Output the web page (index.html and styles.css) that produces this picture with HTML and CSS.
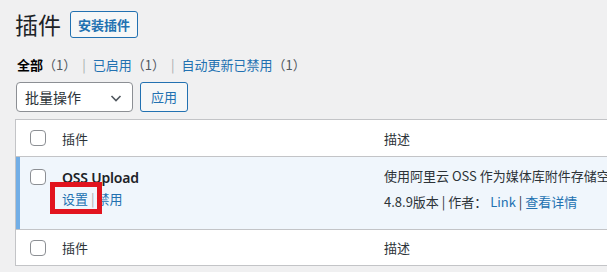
FILE: index.html
```html
<!DOCTYPE html>
<html lang="zh-CN">
<head>
<meta charset="utf-8">
<link rel="stylesheet" href="styles.css">
</head>
<body>
<div class="wrap">
  <div class="head">
    <h1 class="title">插件</h1>
    <a class="btn-add">安装插件</a>
  </div>
  <ul class="subsub">
    <li><b class="current">全部</b><span class="count">（1）</span><span class="sep">|</span></li>
    <li><a>已启用</a><span class="count">（1）</span><span class="sep">|</span></li>
    <li><a>自动更新已禁用</a><span class="count">（1）</span></li>
  </ul>
  <div class="actions">
    <div class="select">
      <span>批量操作</span>
      <svg class="chev" width="16" height="16" viewBox="0 0 16 16"><path d="M3.5 6 L8 10.5 L12.5 6" fill="none" stroke="#50575e" stroke-width="1.6"/></svg>
    </div>
    <a class="btn">应用</a>
  </div>
  <div class="table">
    <div class="row head-row">
      <div class="c1"><span class="cb"></span></div>
      <div class="c2">插件</div>
      <div class="c3">描述</div>
    </div>
    <div class="row active">
      <div class="c1"><span class="cb"></span></div>
      <div class="c2">
        <div class="pname">OSS Upload</div>
        <div class="ractions">
          <a class="set">设置</a><span class="rsep">|</span><a>禁用</a>
          <span class="mark"></span>
        </div>
      </div>
      <div class="c3">
        <div class="desc">使用阿里云 OSS 作为媒体库附件存储空间。</div>
        <div class="meta">4.8.9版本 <span class="msep">|</span> 作者： <a>Link</a> <span class="msep">|</span> <a>查看详情</a></div>
      </div>
    </div>
    <div class="row foot-row">
      <div class="c1"><span class="cb"></span></div>
      <div class="c2">插件</div>
      <div class="c3">描述</div>
    </div>
  </div>
</div>
</body>
</html>
```

FILE: styles.css
```css
html, body {
  margin: 0;
  padding: 0;
  background: #f0f0f1;
  overflow: hidden;
  width: 607px;
  height: 272px;
}
body {
  font-family: "Noto Sans", "Noto Sans CJK SC", sans-serif;
  font-size: 13px;
  color: #3c434a;
}
a { color: #2271b1; text-decoration: none; }
.wrap {
  padding: 0 0 0 15px;
  width: 1000px;
}
.head {
  display: flex;
  align-items: center;
  height: 48px;
}
.title {
  margin: 0;
  font-size: 23px;
  font-weight: 400;
  color: #1d2327;
  line-height: 48px;
  font-family: "Noto Sans CJK SC", sans-serif;
}
.btn-add {
  margin-left: 9px;
  border: 1px solid #2271b1;
  border-radius: 3px;
  background: #f6f7f7;
  color: #2271b1;
  font-weight: 600;
  font-size: 13px;
  height: 25px;
  line-height: 25px;
  padding: 0 7px;
  font-family: "Noto Sans CJK SC", sans-serif;
}
.subsub {
  list-style: none;
  margin: 0;
  padding: 0 0 0 2px;
  display: flex;
  height: 32px;
  align-items: center;
  font-family: "Noto Sans CJK SC", sans-serif;
}
.subsub li { display: flex; align-items: center; }
.current { color: #000; font-weight: 600; }
.count { color: #50575e; }
.sep { color: #a7aaad; margin: 0 7px 0 6px; }
.actions {
  display: flex;
  gap: 7px;
  margin-top: 2px;
  padding-left: 1px;
}
.select {
  height: 28px;
  border: 1px solid #8c8f94;
  border-radius: 4px;
  background: #fff;
  display: flex;
  align-items: center;
  justify-content: space-between;
  padding: 0 8px;
  width: 99px;
  font-size: 14px;
  color: #2c3338;
  font-family: "Noto Sans CJK SC", sans-serif;
}
.chev { margin-top: 1px; }
.btn {
  height: 28px;
  line-height: 28px;
  border: 1px solid #2271b1;
  border-radius: 3px;
  background: #f6f7f7;
  padding: 0 10px;
  font-size: 13px;
  font-family: "Noto Sans CJK SC", sans-serif;
}
.table {
  margin-top: 7px;
  border: 1px solid #c3c4c7;
  background: #fff;
  width: 900px;
  font-family: "Noto Sans CJK SC", sans-serif;
}
.row {
  display: grid;
  grid-template-columns: 36px 322px 1fr;
}
.head-row {
  height: 36px;
  border-bottom: 1px solid #c3c4c7;
  align-items: center;
  color: #2c3338;
}
.foot-row {
  height: 35px;
  align-items: center;
  color: #2c3338;
}
.active {
  height: 72px;
  background: #f0f6fc;
  border-bottom: 1px solid #c3c4c7;
}
.c1 { padding-left: 14px; display: flex; align-items: center; }
.c2, .c3 { padding-left: 10px; }
.head-row .c1, .foot-row .c1 { height: 100%; }
.cb {
  display: block;
  width: 14px;
  height: 14px;
  border: 1px solid #8c8f94;
  border-radius: 4px;
  background: #fff;
}
.active .c1 {
  border-left: 4px solid #72aee6;
  padding-left: 10px;
  align-items: flex-start;
  padding-top: 12px;
}
.active .c2 { padding-top: 10px; }
.pname {
  font-family: "Noto Sans", "Noto Sans CJK SC", sans-serif;
  font-weight: 600;
  font-size: 14px;
  color: #1d2327;
  line-height: 22px;
  letter-spacing: -0.2px;
}
.ractions {
  position: relative;
  line-height: 20px;
  font-size: 13px;
}
.rsep { color: #a7aaad; margin: 0 2px 0 3px; }
.mark {
  position: absolute;
  left: -12px;
  top: -7px;
  width: 42px;
  height: 22px;
  border: 5px solid #e2141e;
}
.active .c3 { padding-top: 8px; }
.desc { line-height: 22px; white-space: nowrap; color: #2c3338; }
.meta { line-height: 22px; margin-top: 4px; color: #2c3338; }
.msep { color: #2c3338; }
```
